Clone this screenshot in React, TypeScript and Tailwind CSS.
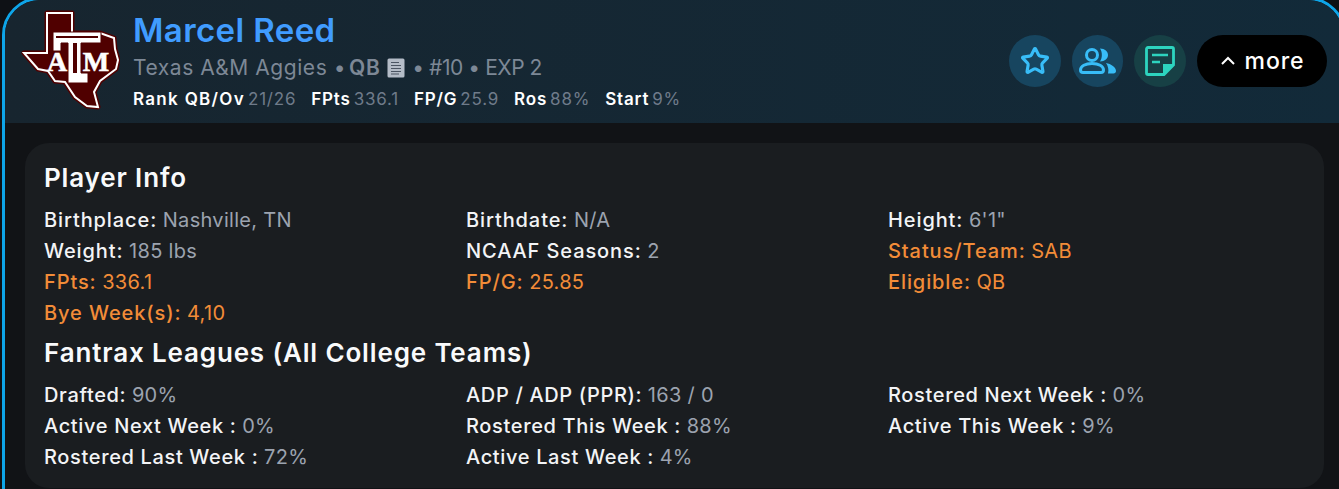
import React from 'react';
import { Star } from 'lucide-react';

const font = { fontFamily: 'Inter, "Noto Sans", sans-serif' };

type Row = { label: string; value: string; hot?: boolean };

const playerInfo: Row[] = [
  { label: 'Birthplace:', value: 'Nashville, TN' },
  { label: 'Birthdate:', value: 'N/A' },
  { label: 'Height:', value: '6\'1"' },
  { label: 'Weight:', value: '185 lbs' },
  { label: 'NCAAF Seasons:', value: '2' },
  { label: 'Status/Team:', value: 'SAB', hot: true },
  { label: 'FPts:', value: '336.1', hot: true },
  { label: 'FP/G:', value: '25.85', hot: true },
  { label: 'Eligible:', value: 'QB', hot: true },
  { label: 'Bye Week(s):', value: '4,10', hot: true },
];

const leagues: Row[] = [
  { label: 'Drafted:', value: '90%' },
  { label: 'ADP / ADP (PPR):', value: '163 / 0' },
  { label: 'Rostered Next Week :', value: '0%' },
  { label: 'Active Next Week :', value: '0%' },
  { label: 'Rostered This Week :', value: '88%' },
  { label: 'Active This Week :', value: '9%' },
  { label: 'Rostered Last Week :', value: '72%' },
  { label: 'Active Last Week :', value: '4%' },
];

const stats = [
  ['Rank QB/Ov', '21/26'],
  ['FPts', '336.1'],
  ['FP/G', '25.9'],
  ['Ros', '88%'],
  ['Start', '9%'],
];

const TEXAS =
  '47,13 72,13 72,33 100,33 114,38 115,49 118,60 116,69 100,81 94,92 98,107 87,106 75,97 65,82 55,81 48,71 38,69 24,53 47,53';

const AggiesLogo = () => (
  <svg width="100" height="100" viewBox="20 10 100 100" className="shrink-0">
    <polygon points={TEXAS} fill="#500000" stroke="#500000" strokeWidth="5" strokeLinejoin="round" />
    <polygon points={TEXAS} fill="#500000" stroke="#fff" strokeWidth="2" />
    <path d="M53 32H101V43H81V73H88V83H68V43H61V51H53Z" fill="#fff" stroke="#500000" strokeWidth="1" />
    <path d="M73 43H77V73H73Z" fill="#500000" />
    <path d="M56 36H98V38H56Z" fill="#500000" />
    <text x="57" y="71" textAnchor="middle" fontFamily="Liberation Serif" fontWeight="700" fontSize="28" fill="#fff" stroke="#fff" strokeWidth="0.6">
      A
    </text>
    <text x="96" y="71" textAnchor="middle" fontFamily="Liberation Serif" fontWeight="700" fontSize="28" fill="#fff" stroke="#fff" strokeWidth="0.6">
      M
    </text>
  </svg>
);

const GroupIcon = () => (
  <svg width="37" height="26" viewBox="0 0 37 26" fill="none">
    <circle cx="13" cy="7" r="5.500" stroke="#38bdf8" strokeWidth="3" />
    <path d="M1.500 22c0-4 5-6.500 11.500-6.500S24.500 18 24.500 22c0 1.500-1 2.500-2.500 2.500H4c-1.500 0-2.500-1-2.500-2.500Z" stroke="#38bdf8" strokeWidth="3" />
    <path d="M21 0.500c5 0 8 3 8 6.500s-3 6.500-8 6.500c2.500-3.500 2.500-9.500 0-13Z" fill="#38bdf8" />
    <path d="M27 15c5 1 10 4 10 8 0 1.500-1 2.500-2.500 2.500H29c1-4 0-7.500-2-10.500Z" fill="#38bdf8" />
  </svg>
);

const NoteIcon = () => (
  <svg width="30" height="30" viewBox="0 0 30 30" fill="none">
    <path d="M3 1.500H27a1.500 1.500 0 0 1 1.500 1.500V19L19 28.500H3A1.500 1.500 0 0 1 1.500 27V3A1.500 1.500 0 0 1 3 1.500Z" stroke="#2dd4bf" strokeWidth="2.800" />
    <path d="M7 9H23M7 16H15" stroke="#2dd4bf" strokeWidth="2.500" />
    <path d="M18 29V18H29Z" fill="#2dd4bf" />
  </svg>
);

const DocIcon = () => (
  <svg width="18" height="20" viewBox="0 0 18 20" className="ml-[7px] mr-[7px] inline-block">
    <rect x="0.500" y="0.500" width="17" height="19" rx="1.500" fill="#b4bcc7" />
    <path d="M4 4.500H12M4 7.500H14M4 10.500H14M4 13.500H14M4 16H12" stroke="#4b5563" strokeWidth="1.200" />
  </svg>
);

const InfoGrid = ({ rows, tight }: { rows: Row[]; tight?: boolean }) => (
  <div className="grid grid-cols-[422px_422px_422px] text-[20px] leading-[31px]">
    {rows.map((row) => (
      <div key={row.label} className={row.hot ? 'text-[#f28c38]' : 'text-[#f3f4f6]'}>
        <span className={tight ? 'font-medium tracking-[0.65px]' : 'font-medium tracking-[0.9px]'}>{row.label}</span>{' '}
        <span className={row.hot ? 'font-normal tracking-[0.3px]' : 'font-normal tracking-[0.3px] text-[#9ca3af]'}>{row.value}</span>
      </div>
    ))}
  </div>
);

export default function App() {
  return (
    <div className="h-[489px] w-[1339px] overflow-hidden bg-[#0e1115]" style={font}>
      <div className="-mt-[3px] ml-[2px] h-[520px] w-[1344px] rounded-t-[38px] border-[3px] border-[#0ea5e9] bg-[#111316]">
        <div className="flex h-[123px] items-center rounded-t-[35px] bg-gradient-to-r from-[#17252f] to-[#122a39] pr-[16px]">
          <div className="-mt-[3px] ml-[15px] w-[108px]">
            <AggiesLogo />
          </div>
          <div className="mb-[1px] ml-[5px] flex-1">
            <div className="text-[33px] font-semibold leading-[36px] tracking-[0.4px] text-[#409cff]">Marcel Reed</div>
            <div className="mt-[7px] flex items-center text-[21px] leading-[26px] tracking-[0.55px] text-[#7d8896]">
              Texas A&amp;M Aggies • <span className="ml-[3px] font-semibold">QB</span>
              <DocIcon />
              <span className="tracking-[-0.45px]">• #10 • EXP 2</span>
            </div>
            <div className="mt-[7px] flex gap-[15px] text-[17px] leading-[22px] tracking-[0.8px]">
              {stats.map(([label, value], i) => (
                <div key={label} className="flex gap-[3px]">
                  <span className={i === 0 ? 'font-semibold tracking-[1.3px] text-white' : 'font-semibold text-white'}>{label}</span>
                  <span className="text-[#6f7b8a]">{value}</span>
                </div>
              ))}
            </div>
          </div>
          <div className="-mt-[1px] flex items-center gap-[11px]">
            <div className="flex h-[52px] w-[52px] items-center justify-center rounded-full bg-[#17455f]">
              <Star size={30} strokeWidth={2.5} color="#38bdf8" />
            </div>
            <div className="flex h-[52px] w-[51px] items-center justify-center rounded-full bg-[#17455f]">
              <GroupIcon />
            </div>
            <div className="flex h-[52px] w-[52px] items-center justify-center rounded-full bg-[#174045]">
              <NoteIcon />
            </div>
            <div className="flex h-[52px] w-[130px] items-center justify-center gap-[9px] rounded-full bg-black text-[23px] font-medium tracking-[0.9px] text-white">
              <svg width="16" height="10" viewBox="0 0 16 10" fill="none">
                <path d="M2 8L8 2L14 8" stroke="#fff" strokeWidth="2" />
              </svg>
              more
            </div>
          </div>
        </div>
        <div className="ml-[20px] mt-[20px] h-[345px] w-[1299px] rounded-[24px] bg-[#1a1d20] pl-[19px] pt-[16px]">
          <h2 className="text-[26px] font-semibold leading-[38px] tracking-[0.85px] text-[#f9fafb]">Player Info</h2>
          <div className="mt-[8px]">
            <InfoGrid rows={playerInfo} />
          </div>
          <h2 className="mt-[5px] text-[26px] font-semibold leading-[38px] tracking-[0.85px] text-[#f9fafb]">
            Fantrax Leagues (All College Teams)
          </h2>
          <div className="mt-[8px]">
            <InfoGrid rows={leagues} tight />
          </div>
        </div>
      </div>
    </div>
  );
}
